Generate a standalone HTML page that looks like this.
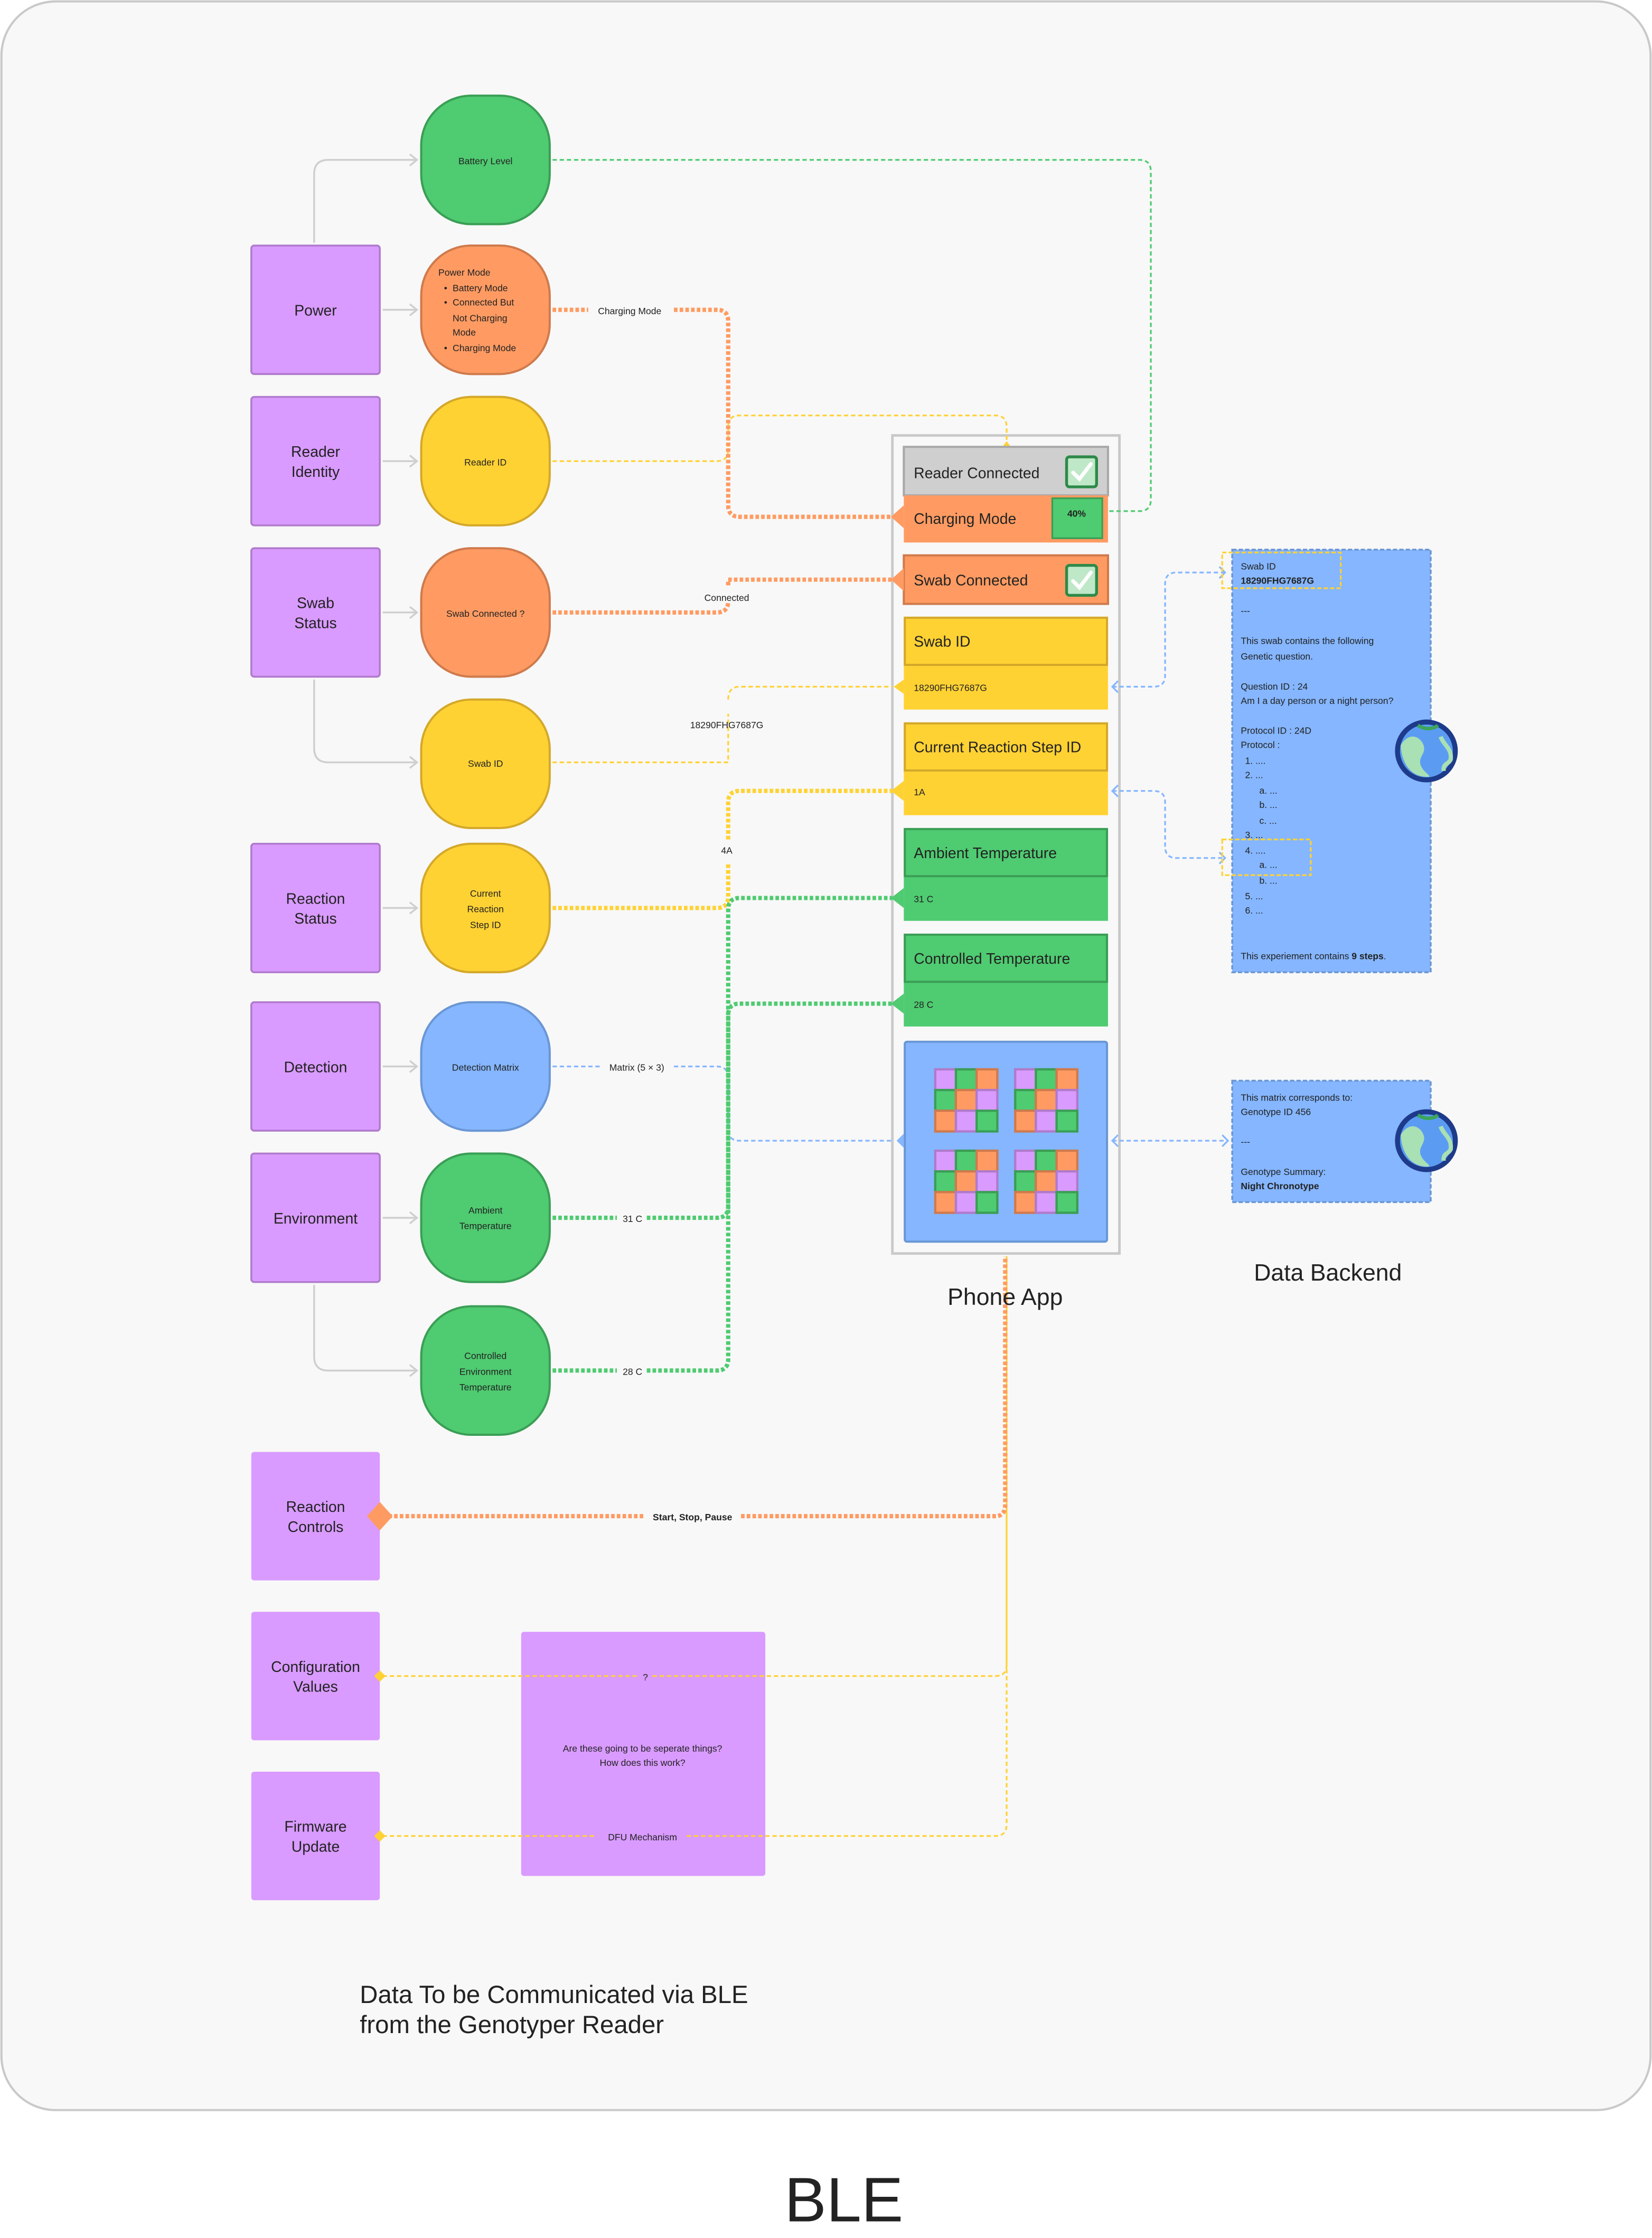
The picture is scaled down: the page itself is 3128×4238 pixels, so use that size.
<!DOCTYPE html>
<html><head><meta charset="utf-8"><style>
html,body{margin:0;padding:0;background:#fff;}
svg{display:block}
text{font-family:"Liberation Sans",sans-serif;fill:#222}
</style></head><body>
<svg width="3128" height="4238" viewBox="0 0 1157 1567.6" preserveAspectRatio="none" xmlns="http://www.w3.org/2000/svg">
<defs>
<g id="grid">
<rect x="0" y="0" width="14.5" height="14.5" fill="#d99bff" stroke="#b07acc" stroke-width="1.6"/>
<rect x="14.5" y="0" width="14.5" height="14.5" fill="#4fcb71" stroke="#3a9e55" stroke-width="1.6"/>
<rect x="29" y="0" width="14.5" height="14.5" fill="#ff9b62" stroke="#cf7a4d" stroke-width="1.6"/>
<rect x="0" y="14.5" width="14.5" height="14.5" fill="#4fcb71" stroke="#3a9e55" stroke-width="1.6"/>
<rect x="14.5" y="14.5" width="14.5" height="14.5" fill="#ff9b62" stroke="#cf7a4d" stroke-width="1.6"/>
<rect x="29" y="14.5" width="14.5" height="14.5" fill="#d99bff" stroke="#b07acc" stroke-width="1.6"/>
<rect x="0" y="29" width="14.5" height="14.5" fill="#ff9b62" stroke="#cf7a4d" stroke-width="1.6"/>
<rect x="14.5" y="29" width="14.5" height="14.5" fill="#d99bff" stroke="#b07acc" stroke-width="1.6"/>
<rect x="29" y="29" width="14.5" height="14.5" fill="#4fcb71" stroke="#3a9e55" stroke-width="1.6"/>
</g>
<g id="check">
<rect x="0" y="0" width="21" height="21" rx="2" fill="#bfe8c8" stroke="#2e8a48" stroke-width="2"/>
<path d="M4.5 11 L9 15.5 L17 5" fill="none" stroke="#fff" stroke-width="2.6" stroke-linecap="round"/>
</g>
<g id="globe">
<circle cx="0" cy="0" r="22" fill="#1e3a8a"/>
<circle cx="0" cy="0" r="18.5" fill="#5b9cf2"/>
<path d="M-18 -4 C-12 -14 -4 -10 -2 -4 C0 2 -6 4 -4 10 C-2 15 2 16 2 18 C-8 19 -17 12 -18 -4Z" fill="#a9e0b4"/>
<path d="M-6 -18 C0 -14 6 -16 8 -18" fill="none" stroke="#3ca55c" stroke-width="2.5"/>
<path d="M10 -10 C12 -4 18 -2 17 6 C15 10 12 8 12 14" fill="none" stroke="#a9e0b4" stroke-width="3"/>
</g>
</defs>

<rect x="1" y="1" width="1155" height="1477" rx="38" fill="#f8f8f8" stroke="#c9c9c9" stroke-width="1.5"/>
<text x="591" y="1556" font-size="44" text-anchor="middle" fill="#2a2a2a">BLE</text>

<g fill="none" stroke="#cfcfcf" stroke-width="1.3">
<path d="M220 170 V122 Q220 112 230 112 H292"/><path d="M287 108 L292 112 L287 116"/>
<path d="M268 217 H292"/><path d="M287 213 L292 217 L287 221"/>
<path d="M268 323 H292"/><path d="M287 319 L292 323 L287 327"/>
<path d="M268 429 H292"/><path d="M287 425 L292 429 L287 433"/>
<path d="M220 476 V524 Q220 534 230 534 H292"/><path d="M287 530 L292 534 L287 538"/>
<path d="M268 636 H292"/><path d="M287 632 L292 636 L287 640"/>
<path d="M268 747 H292"/><path d="M287 743 L292 747 L287 751"/>
<path d="M268 853 H292"/><path d="M287 849 L292 853 L287 857"/>
<path d="M220 900 V950 Q220 960 230 960 H292"/><path d="M287 956 L292 960 L287 964"/>
</g>

<g fill="#d99bff" stroke="#b07acc" stroke-width="1.3">
<rect x="176" y="172" width="90" height="90" rx="2"/>
<rect x="176" y="278" width="90" height="90" rx="2"/>
<rect x="176" y="384" width="90" height="90" rx="2"/>
<rect x="176" y="591" width="90" height="90" rx="2"/>
<rect x="176" y="702" width="90" height="90" rx="2"/>
<rect x="176" y="808" width="90" height="90" rx="2"/>
</g>
<g fill="#d99bff">
<rect x="176" y="1017" width="90" height="90" rx="2"/>
<rect x="176" y="1129" width="90" height="90" rx="2"/>
<rect x="176" y="1241" width="90" height="90" rx="2"/>
<rect x="365" y="1143" width="171" height="171" rx="2"/>
</g>
<g font-size="10.5" text-anchor="middle">
<text x="221" y="221">Power</text>
<text x="221" y="320">Reader</text><text x="221" y="334">Identity</text>
<text x="221" y="426">Swab</text><text x="221" y="440">Status</text>
<text x="221" y="633">Reaction</text><text x="221" y="647">Status</text>
<text x="221" y="751">Detection</text>
<text x="221" y="857">Environment</text>
<text x="221" y="1059">Reaction</text><text x="221" y="1073">Controls</text>
<text x="221" y="1171">Configuration</text><text x="221" y="1185">Values</text>
<text x="221" y="1283">Firmware</text><text x="221" y="1297">Update</text>
</g>

<g stroke-width="1.5">
<rect x="295" y="67" width="90" height="90" rx="35" fill="#4fcb71" stroke="#3a9e55"/>
<rect x="295" y="172" width="90" height="90" rx="35" fill="#ff9b62" stroke="#cf7a4d"/>
<rect x="295" y="278" width="90" height="90" rx="35" fill="#ffd234" stroke="#d4a82a"/>
<rect x="295" y="384" width="90" height="90" rx="35" fill="#ff9b62" stroke="#cf7a4d"/>
<rect x="295" y="490" width="90" height="90" rx="35" fill="#ffd234" stroke="#d4a82a"/>
<rect x="295" y="591" width="90" height="90" rx="35" fill="#ffd234" stroke="#d4a82a"/>
<rect x="295" y="702" width="90" height="90" rx="35" fill="#85b6ff" stroke="#6a96d4"/>
<rect x="295" y="808" width="90" height="90" rx="35" fill="#4fcb71" stroke="#3a9e55"/>
<rect x="295" y="915" width="90" height="90" rx="35" fill="#4fcb71" stroke="#3a9e55"/>
</g>
<g font-size="6.5" text-anchor="middle">
<text x="340" y="115">Battery Level</text>
<text x="340" y="326">Reader ID</text>
<text x="340" y="432">Swab Connected ?</text>
<text x="340" y="537">Swab ID</text>
<text x="340" y="628">Current</text><text x="340" y="639">Reaction</text><text x="340" y="650">Step ID</text>
<text x="340" y="750">Detection Matrix</text>
<text x="340" y="850">Ambient</text><text x="340" y="861">Temperature</text>
<text x="340" y="952">Controlled</text><text x="340" y="963">Environment</text><text x="340" y="974">Temperature</text>
</g>
<g font-size="6.5">
<text x="307" y="193">Power Mode</text>
<text x="311" y="204">•</text><text x="317" y="204">Battery Mode</text>
<text x="311" y="214">•</text><text x="317" y="214">Connected But</text>
<text x="317" y="225">Not Charging</text>
<text x="317" y="235">Mode</text>
<text x="311" y="246">•</text><text x="317" y="246">Charging Mode</text>
</g>

<rect x="625" y="305" width="159" height="573" fill="none" stroke="#c9c9c9" stroke-width="1.8"/>

<g fill="none">
<path d="M387 112 H798 Q806 112 806 120 V350 Q806 358 798 358 H776" stroke="#4fcb71" stroke-width="1.2" stroke-dasharray="3 2"/>
<path d="M387 323 H502 Q510 323 510 315 V299 Q510 291 518 291 H697 Q705 291 705 299 V312" stroke="#ffd234" stroke-width="1.2" stroke-dasharray="3 2"/>
<path d="M387 217 H412 M472 217 H502 Q510 217 510 225 V354 Q510 362 518 362 H625" stroke="#ff9b62" stroke-width="3" stroke-dasharray="2.5 1.5"/>
<path d="M387 429 H502 Q510 429 510 421" stroke="#ff9b62" stroke-width="3" stroke-dasharray="2.5 1.5"/>
<path d="M510 410 V406 H625" stroke="#ff9b62" stroke-width="3" stroke-dasharray="2.5 1.5"/>
<path d="M387 534 H510 V500 M510 490 Q510 481 518 481 H625" stroke="#ffd234" stroke-width="1.2" stroke-dasharray="3 2"/>
<path d="M387 636 H502 Q510 636 510 628 V604 M510 588 V562 Q510 554 518 554 H625" stroke="#ffd234" stroke-width="3" stroke-dasharray="2.5 1.5"/>
<path d="M387 747 H420 M472 747 H502 Q510 747 510 755 V791 Q510 799 518 799 H625" stroke="#85b6ff" stroke-width="1.2" stroke-dasharray="3 2"/>
<path d="M387 853 H432 M453 853 H502 Q510 853 510 845 V637 Q510 629 518 629 H625" stroke="#4fcb71" stroke-width="3" stroke-dasharray="2.5 1.5"/>
<path d="M387 960 H432 M453 960 H502 Q510 960 510 952 V711 Q510 703 518 703 H625" stroke="#4fcb71" stroke-width="3" stroke-dasharray="2.5 1.5"/>
<path d="M705 1166 V880" stroke="#ffd234" stroke-width="1.2"/>
<path d="M272 1062 H452 M519 1062 H697 Q704 1062 704 1054 V880" stroke="#ff9b62" stroke-width="3" stroke-dasharray="2.5 1.5"/>
<path d="M268 1174 H448 M457 1174 H697 Q705 1174 705 1166" stroke="#ffd234" stroke-width="1.2" stroke-dasharray="3 2"/>
<path d="M268 1286 H418 M481 1286 H697 Q705 1286 705 1278 V1166" stroke="#ffd234" stroke-width="1.2" stroke-dasharray="3 2"/>
<path d="M779 481 H808 Q816 481 816 473 V409 Q816 401 824 401 H858" stroke="#85b6ff" stroke-width="1.2" stroke-dasharray="3 2"/>
<path d="M779 554 H808 Q816 554 816 562 V593 Q816 601 824 601 H858" stroke="#85b6ff" stroke-width="1.2" stroke-dasharray="3 2"/>
<path d="M779 799 H860" stroke="#85b6ff" stroke-width="1.2" stroke-dasharray="3 2"/>
<g stroke="#85b6ff" stroke-width="1.2">
<path d="M783 477 L779 481 L783 485"/><path d="M783 550 L779 554 L783 558"/><path d="M783 795 L779 799 L783 803"/>
<path d="M854 397 L858 401 L854 405"/><path d="M854 597 L858 601 L854 605"/><path d="M856 795 L860 799 L856 803"/>
</g>
</g>
<path d="M266 1052 L275 1062 L266 1072 L257 1062Z" fill="#ff9b62"/>
<path d="M266 1170 L270 1174 L266 1178 L262 1174Z" fill="#ffd234"/>
<path d="M266 1282 L270 1286 L266 1290 L262 1286Z" fill="#ffd234"/>
<path d="M705 309 L708 313 L705 316 L702 313Z" fill="#ffd234"/>

<g font-size="6.5" text-anchor="middle">
<text x="441" y="220">Charging Mode</text>
<text x="509" y="421">Connected</text>
<text x="509" y="510">18290FHG7687G</text>
<text x="509" y="598">4A</text>
<text x="446" y="750">Matrix (5 × 3)</text>
<text x="443" y="856">31 C</text>
<text x="443" y="963">28 C</text>
<text x="485" y="1065" font-weight="bold">Start, Stop, Pause</text>
<text x="452" y="1177">?</text>
<text x="450" y="1227">Are these going to be seperate things?</text>
<text x="450" y="1237">How does this work?</text>
<text x="450" y="1289">DFU Mechanism</text>
</g>

<rect x="633" y="313" width="143" height="34" fill="#cfcfcf" stroke="#a8a8a8" stroke-width="1.5"/>
<text x="640" y="335" font-size="10.5">Reader Connected</text>
<use href="#check" x="747" y="320"/>
<rect x="633" y="347" width="143" height="33" fill="#ff9b62"/>
<path d="M633 354 L624 362 L633 370Z" fill="#ff9b62"/>
<text x="640" y="367" font-size="10.5">Charging Mode</text>
<rect x="737" y="349" width="35" height="28" fill="#4fcb71" stroke="#3a9e55" stroke-width="1.2"/>
<text x="754" y="362" font-size="6.5" text-anchor="middle" font-weight="bold">40%</text>

<rect x="633" y="389" width="143" height="34" fill="#ff9b62" stroke="#cf7a4d" stroke-width="1.5"/>
<path d="M633 398 L624 406 L633 414Z" fill="#ff9b62"/>
<text x="640" y="410" font-size="10.5">Swab Connected</text>
<use href="#check" x="747" y="396"/>

<rect x="633" y="432" width="143" height="65" fill="#ffd234"/>
<rect x="633.7" y="432.7" width="141.6" height="33" fill="none" stroke="#d4a82a" stroke-width="1.5"/>
<path d="M633 476 L626 481 L633 486Z" fill="#ffd234"/>
<text x="640" y="453" font-size="10.5">Swab ID</text>
<text x="640" y="484" font-size="6.5">18290FHG7687G</text>

<rect x="633" y="506" width="143" height="65" fill="#ffd234"/>
<rect x="633.7" y="506.7" width="141.6" height="33" fill="none" stroke="#d4a82a" stroke-width="1.5"/>
<path d="M633 547 L624 554 L633 561Z" fill="#ffd234"/>
<text x="640" y="527" font-size="10.5">Current Reaction Step ID</text>
<text x="640" y="557" font-size="6.5">1A</text>

<rect x="633" y="580" width="143" height="65" fill="#4fcb71"/>
<rect x="633.7" y="580.7" width="141.6" height="33" fill="none" stroke="#3a9e55" stroke-width="1.5"/>
<path d="M633 622 L624 629 L633 636Z" fill="#4fcb71"/>
<text x="640" y="601" font-size="10.5">Ambient Temperature</text>
<text x="640" y="632" font-size="6.5">31 C</text>

<rect x="633" y="654" width="143" height="65" fill="#4fcb71"/>
<rect x="633.7" y="654.7" width="141.6" height="33" fill="none" stroke="#3a9e55" stroke-width="1.5"/>
<path d="M633 696 L624 703 L633 710Z" fill="#4fcb71"/>
<text x="640" y="675" font-size="10.5">Controlled Temperature</text>
<text x="640" y="706" font-size="6.5">28 C</text>

<rect x="633.7" y="729.7" width="141.6" height="140" rx="1.5" fill="#85b6ff" stroke="#6a96d4" stroke-width="1.5"/>
<path d="M633 794 L628 799 L633 804Z" fill="#85b6ff"/>
<use href="#grid" x="655" y="749"/>
<use href="#grid" x="711" y="749"/>
<use href="#grid" x="655" y="806"/>
<use href="#grid" x="711" y="806"/>

<text x="704" y="914" font-size="16.5" text-anchor="middle">Phone App</text>

<rect x="863" y="385" width="139" height="296" fill="#85b6ff" stroke="#6a96d4" stroke-width="1.3" stroke-dasharray="3 1.5"/>
<rect x="856" y="387" width="83" height="25" fill="none" stroke="#ffd234" stroke-width="1.2" stroke-dasharray="3 1.5"/>
<rect x="856" y="588" width="62" height="25" fill="none" stroke="#ffd234" stroke-width="1.2" stroke-dasharray="3 1.5"/>
<g font-size="6.5">
<text x="869" y="399">Swab ID</text>
<text x="869" y="409" font-weight="bold">18290FHG7687G</text>
<text x="869" y="430">---</text>
<text x="869" y="451">This swab contains the following</text>
<text x="869" y="462">Genetic question.</text>
<text x="869" y="483">Question ID : 24</text>
<text x="869" y="493">Am I a day person or a night person?</text>
<text x="869" y="514">Protocol ID : 24D</text>
<text x="869" y="524">Protocol :</text>
<text x="872" y="535">1. ....</text>
<text x="872" y="545">2. ...</text>
<text x="882" y="556">a. ...</text>
<text x="882" y="566">b. ...</text>
<text x="882" y="577">c. ...</text>
<text x="872" y="587">3. ...</text>
<text x="872" y="598">4. ....</text>
<text x="882" y="608">a. ...</text>
<text x="882" y="619">b. ...</text>
<text x="872" y="630">5. ...</text>
<text x="872" y="640">6. ...</text>
<text x="869" y="672">This experiement contains <tspan font-weight="bold">9 steps</tspan>.</text>
</g>
<use href="#globe" x="999" y="526"/>

<rect x="863" y="757" width="139" height="85" fill="#85b6ff" stroke="#6a96d4" stroke-width="1.3" stroke-dasharray="3 1.5"/>
<g font-size="6.5">
<text x="869" y="771">This matrix corresponds to:</text>
<text x="869" y="781">Genotype ID 456</text>
<text x="869" y="802">---</text>
<text x="869" y="823">Genotype Summary:</text>
<text x="869" y="833" font-weight="bold">Night Chronotype</text>
</g>
<use href="#globe" x="999" y="799"/>
<text x="930" y="897" font-size="16.5" text-anchor="middle">Data Backend</text>

<text x="252" y="1403" font-size="17.5">Data To be Communicated via BLE</text>
<text x="252" y="1424" font-size="17.5">from the Genotyper Reader</text>
</svg>
</body></html>
